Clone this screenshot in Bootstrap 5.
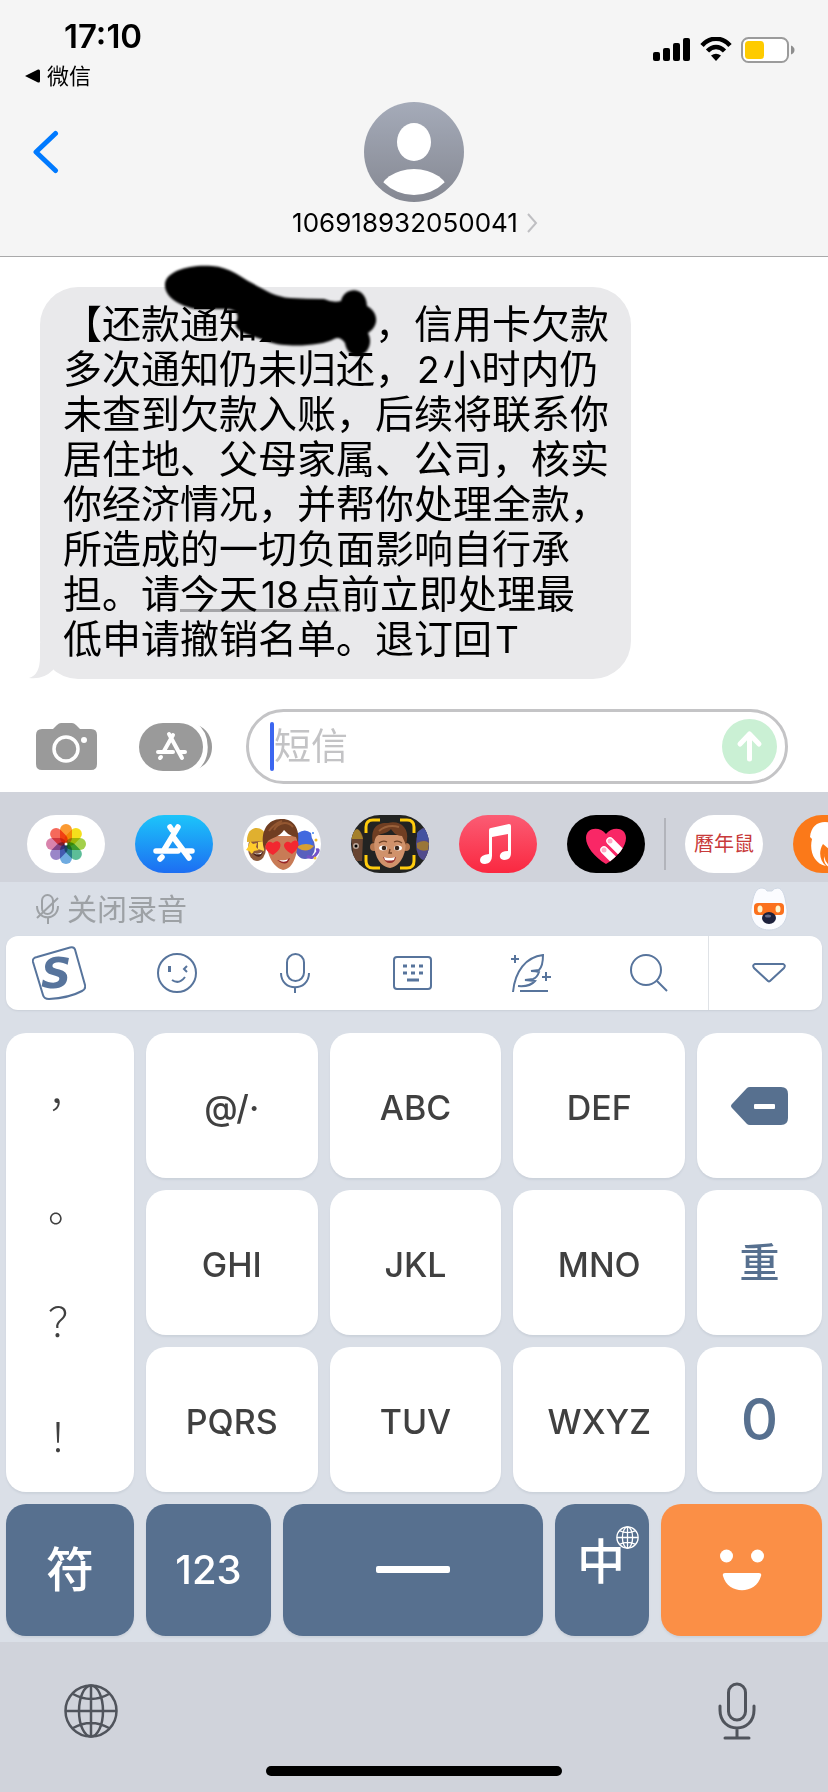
<!DOCTYPE html>
<html lang="zh-CN">
<head>
<meta charset="utf-8">
<meta name="viewport" content="width=device-width, initial-scale=1">
<title>短信</title>
<link href="https://cdn.jsdelivr.net/npm/bootstrap@5.3.0/dist/css/bootstrap.min.css" rel="stylesheet">
<style>
  :root { --slate: #57708f; --tray: #d0d3db; --board: #dadfe7; }
  body { font-family: Inter, "Noto Sans CJK SC", sans-serif; color: #000; background: #fff; text-spacing-trim: space-all; }
  svg { display: block; flex: none; }
  .btn { --bs-btn-border-width: 0; --bs-btn-padding-x: 0; --bs-btn-padding-y: 0; }

  .chat-head { background: #f5f5f5; border-bottom: 1px solid #a9a9aa; }
  .status { height: 102px; padding: 16px 33px 0 25px; }
  .clock { font-size: 33px; line-height: 40px; font-weight: 600; padding-left: 39px; }
  .return-link { font-size: 22px; line-height: 40px; gap: 7px; color: #000; }
  .signals { gap: 9px; margin-top: 21px; }
  .nav-row { display: grid; grid-template-columns: 1fr auto 1fr; align-items: center; padding: 0 32px; }
  .sender { font-size: 26px; line-height: 36px; gap: 8px; padding: 3px 0 15px 2px; color: #000; }

  .thread { padding: 30px 40px; }
  .bubble { position: relative; width: 591px; max-width: 100%; padding: 14px 12px 18px 23px; border-radius: 38px; background: #e9e9eb; }
  .bubble p { font-size: 39px; line-height: 45px; white-space: nowrap; }
  .digits { margin: 0 3px; font-size: 37px; line-height: 1; }
  .date-link { color: #000; border-bottom: 3px solid #a5a5a8; text-decoration: none; display: inline-block; line-height: 36px; height: 36px; }
  .tail { position: absolute; left: -11px; bottom: 0; }
  .ink { position: absolute; left: 120px; top: -27px; filter: blur(1px); }

  .compose { padding: 0 40px 8px 36px; }
  .compose-tools { gap: 42px; margin-right: 34px; }
  .field { height: 75px; min-width: 0; border: 3px solid #c4c4c6; border-radius: 38px; padding: 0 8px 0 21px; }
  .caret { width: 4px; height: 49px; border-radius: 2px; background: #3b66f0; flex: none; }
  .field input { border: 0; outline: 0; background: none; font-size: 37px; line-height: 48px; padding: 0; min-width: 0; }
  .field input::placeholder { color: #c3c3c5; opacity: 1; }
  .send { width: 55px; height: 55px; flex: none; }

  .apps { background: var(--tray); height: 90px; padding: 14px 0 0 27px; gap: 30px; overflow: hidden; }
  .apps .btn { width: 78px; height: 58px; border-radius: 29px; overflow: hidden; flex: none; }
  .apps .rule { width: 2px; height: 52px; margin: 0 -11px; background: #b2b4bb; flex: none; }

  .board { background: var(--board); padding: 0 6px 6px; }
  .voice { height: 54px; padding: 0 34px 0 30px; }
  .voice .btn { font-size: 30px; line-height: 40px; color: #9da1a5; gap: 7px; }
  .tools { height: 74px; background: #fff; border-radius: 12px; margin-bottom: 23px; box-shadow: 0 1px 2px #c9ced7; }
  .tools .btn { height: 74px; }
  .tools .six { display: grid; grid-template-columns: repeat(6, 1fr); flex: 0 0 calc(86% + 6px); margin-left: -6px; }
  .tools .fold { border-left: 1px solid #dfe2e6; border-radius: 0; flex: 1; padding-left: 8px; }
  .tools svg, .keys svg, .keys-low svg { margin: auto; }
  .keys { display: grid; gap: 12px; grid-template-columns: 128fr 172fr 172fr 172fr 125fr; grid-template-rows: repeat(3, 145px); margin-bottom: 12px; }
  .keys-low { display: grid; gap: 12px; grid-template-columns: 128fr 125fr 260fr 94fr 161fr; grid-template-rows: 132px; }
  .key { border-radius: 20px; background: #fff; color: #404040; font-size: 34px; font-weight: 500; box-shadow: 0 2px 2px #ccd2db; }
  .letters { padding-top: 4px; }
  .key.slate-text { color: var(--slate); }
  .key.zero { font-size: 58px; }
  .key.zhong { font-size: 40px; }
  .keys-low .key { background: var(--slate); color: #fff; font-size: 40px; }
  .keys-low .hanzi { font-size: 48px; }
  .keys-low .key.enter { background: #fb8f46; }
  .marks { grid-row: 1 / 4; display: grid; grid-template-rows: repeat(4, 1fr); padding-right: 4px; }
  .marks .btn { font: 300 40px/48px "Noto Sans CJK SC", sans-serif; color: #404040; }
  .lang { position: relative; }
  .lang svg { position: absolute; top: 22px; right: 10px; }
  .lang span { display: block; margin: 0 2px 16px 0; }

  .dock { background: var(--tray); min-height: 150px; padding: 40px 64px 16px; }
  .home-bar { width: 296px; height: 10px; border-radius: 5px; background: #000; }
</style>
</head>
<body class="min-vh-100 d-flex flex-column">

<header class="chat-head">
  <div class="status d-flex justify-content-between">
    <div>
      <div class="clock">17:10</div>
      <a href="#" class="return-link d-flex align-items-center text-decoration-none">
        <svg width="15" height="14" viewBox="0 0 15 14"><path d="M0 7 13 .6Q15 0 15 2v10q0 2-2 1.400Z"/></svg>微信
      </a>
    </div>
    <div class="signals d-flex align-items-start">
      <svg width="38" height="24" viewBox="0 0 38 24"><rect y="15" width="7" height="9" rx="2"/><rect x="10" y="11" width="7" height="13" rx="2"/><rect x="20" y="6" width="7" height="18" rx="2"/><rect x="30" y="1" width="7" height="23" rx="2"/></svg>
      <svg width="32" height="24" viewBox="0 0 32 24"><g fill="none" stroke="#000" stroke-width="4.500"><path d="M2 8.500C10-.5 22-.5 30 8.500"/><path d="M7.500 14c5-5.300 12-5.300 17 0"/></g><path d="M11 18.500q5-3.500 10 0L16 24Z"/></svg>
      <svg width="54" height="26" viewBox="0 0 54 26"><rect x="1" y="1" width="46" height="24" rx="6.500" fill="#fff" stroke="#9b9b9b" stroke-width="2"/><rect x="4" y="4" width="19" height="18" rx="3.500" fill="#fecb00"/><path d="M50 8.500q3.500 1.500 3.500 4.500T50 17.500Z" fill="#8e8e8e"/></svg>
    </div>
  </div>
  <div class="nav-row">
    <button class="btn text-start" aria-label="返回"><svg width="28" height="44" viewBox="0 0 28 44"><path d="M23.500 3.500 4 22l19.500 18.500" fill="none" stroke="#007aff" stroke-width="5" stroke-linecap="round" stroke-linejoin="round"/></svg></button>
    <svg width="100" height="100" viewBox="0 0 100 100"><defs><linearGradient id="av" x2="0" y2="1"><stop stop-color="#a5abb9"/><stop offset="1" stop-color="#858892"/></linearGradient><clipPath id="avc"><circle cx="50" cy="50" r="43"/></clipPath></defs><circle cx="50" cy="50" r="50" fill="url(#av)"/><ellipse cx="50" cy="40" rx="17" ry="19" fill="#fff"/><ellipse cx="50" cy="92" rx="35" ry="25" fill="#fff" clip-path="url(#avc)"/></svg>
    <span></span>
  </div>
  <a href="#" class="sender d-flex justify-content-center align-items-center text-decoration-none">106918932050041
    <svg width="12" height="20" viewBox="0 0 12 20"><path d="m2 1 8 9-8 9" fill="none" stroke="#bfbfc2" stroke-width="2"/></svg>
  </a>
</header>

<main class="flex-grow-1">
  <div class="thread">
    <div class="bubble">
      <svg class="tail" width="36" height="36" viewBox="0 0 36 36"><path d="M11 0v14Q11 32 0 35q14 2 24-8V0Z" fill="#e9e9eb"/></svg>
      <p class="mb-0 position-relative">【还款通知】　　，信用卡欠款<br>多次通知仍未归还，<span class="digits">2</span>小时内仍<br>未查到欠款入账，后续将联系你<br>居住地、父母家属、公司，核实<br>你经济情况，并帮你处理全款，<br>所造成的一切负面影响自行承<br>担。请<a href="#" class="date-link">今天<span class="digits">18</span>点</a>前立即处理最<br>低申请撤销名单。退订回<span class="digits">T</span></p>
      <svg class="ink" width="222" height="100" viewBox="160 260 222 100"><path d="M165 284C166 271 190 264 212 266C230 267 242 278 252 283C266 291 276 297 290 298Q307 299 324 299Q333 303 341 301C344 287 366 285 367 306C378 312 380 325 368 333C374 345 366 356 357 356C350 355 346 350 345 343Q340 336 334 339C322 346 286 348 269 342C255 336 230 333 237 320C240 310 230 309 223 309L196 309C180 306 164 297 165 284Z"/></svg>
    </div>
  </div>

  <form class="compose d-flex align-items-center">
    <div class="compose-tools d-flex align-items-center">
      <button type="button" class="btn" aria-label="相机"><svg width="61" height="48" viewBox="0 0 61 48"><path d="M6 6h11l4-4q2-2 4-2h11q2 0 4 2l4 4h11q6 0 6 6v29q0 6-6 6H6q-6 0-6-6V12q0-6 6-6Z" fill="#9a9a9a"/><circle cx="30" cy="26" r="12" fill="none" stroke="#fff" stroke-width="3.500"/><circle cx="48" cy="17" r="3" fill="#fff"/></svg></button>
      <button type="button" class="btn" aria-label="应用"><svg width="73" height="48" viewBox="0 0 73 48"><rect width="64" height="48" rx="24" fill="#9a9a9a"/><path d="M58 2c20 7 20 37 0 44 12-12 12-32 0-44Z" fill="#9a9a9a"/><path d="M56 1c15 10 15 36 0 46" fill="none" stroke="#fff" stroke-width="3"/><g stroke="#fff" stroke-width="4" stroke-linecap="round" fill="none"><path d="m34 12-9 16M30 11l13 24M19 29h15M41 29h5M22 34l-1 1"/></g></svg></button>
    </div>
    <div class="field d-flex align-items-center flex-grow-1">
      <span class="caret"></span>
      <input type="text" class="flex-grow-1" placeholder="短信" aria-label="短信">
      <button type="button" class="btn send" aria-label="发送"><svg width="55" height="55" viewBox="0 0 55 55"><circle cx="27.500" cy="27.500" r="27.500" fill="#caf0d4"/><path d="M27.500 40V16M18 25l9.500-10L37 25" fill="none" stroke="#fff" stroke-width="5" stroke-linecap="round" stroke-linejoin="round"/></svg></button>
    </div>
  </form>
</main>

<nav class="apps d-flex align-items-center" aria-label="信息应用">
  <button class="btn" aria-label="照片"><svg width="78" height="58" viewBox="0 0 78 58"><style>.petals rect { mix-blend-mode: multiply; }</style><rect width="78" height="58" fill="#fff"/><g class="petals"><rect x="33" y="9" width="12" height="20" rx="6" fill="#fb9a32"/><rect x="33" y="9" width="12" height="20" rx="6" fill="#f5df1c" transform="rotate(45 39 29)"/><rect x="33" y="9" width="12" height="20" rx="6" fill="#a3d04b" transform="rotate(90 39 29)"/><rect x="33" y="9" width="12" height="20" rx="6" fill="#5dbd98" transform="rotate(135 39 29)"/><rect x="33" y="9" width="12" height="20" rx="6" fill="#6fabe0" transform="rotate(180 39 29)"/><rect x="33" y="9" width="12" height="20" rx="6" fill="#9a86c8" transform="rotate(225 39 29)"/><rect x="33" y="9" width="12" height="20" rx="6" fill="#d983ac" transform="rotate(270 39 29)"/><rect x="33" y="9" width="12" height="20" rx="6" fill="#f5695b" transform="rotate(315 39 29)"/></g><circle cx="39" cy="29" r="1.500" fill="#fff"/></svg></button>
  <button class="btn" aria-label="App Store"><svg width="78" height="58" viewBox="0 0 78 58"><defs><linearGradient id="as" x2="0" y2="1"><stop stop-color="#1cc5fa"/><stop offset="1" stop-color="#1d6ef2"/></linearGradient></defs><rect width="78" height="58" fill="url(#as)"/><g stroke="#fff" stroke-width="5.500" stroke-linecap="round"><path d="M43 12 29 35M35 12l2 3M39 23l15 20M21 36h22M51 36h6M27 42l-2 2"/></g></svg></button>
  <button class="btn" aria-label="拟我表情贴纸"><svg width="78" height="58" viewBox="0 0 78 58"><rect width="78" height="58" fill="#fff"/><ellipse cx="14" cy="33" rx="9" ry="13" fill="#8d5a3c"/><path d="M4 27C3 10 20 9 23 21l-2 5Z" fill="#e0b02f"/><path d="m7 26 3 3 4-1-1 4 3 3-5 1-2 3-3-3-3-1 2-3Z" fill="#ffcc2b"/><path d="m15 27 6-1v10l-6-2Z" fill="#ffd94b"/><path d="M9 38q6 2 11-1-3 9-11 1Z" fill="#4a2118"/><path d="M10 38q5 2 9-1l-1 2q-4 1-8-1Z" fill="#fff"/><ellipse cx="62" cy="32" rx="10" ry="12" fill="#5860bd"/><path d="M55 18q7-5 13 0l2 12H55Z" fill="#4269df"/><path d="M55 31q8-4 16 0-7 8-16 2Z" fill="#d7a032"/><path d="M64 41q6 4 10-3 3-4-1-3" fill="none" stroke="#7353c8" stroke-width="3"/><circle cx="70" cy="18" r="1" fill="#4584e9"/><circle cx="73" cy="25" r="1.500" fill="#efbb28"/><circle cx="72" cy="43" r="1.500" fill="#f4ca3e"/><path d="M23 21h31c2 15-3 33-14 34C29 52 23 38 23 21Z" fill="#c87b56"/><path d="M21 34C16 14 27 3 39 4c12 0 18 10 16 24l-2-6c-7-1-10-5-12-7-4 7-13 8-16 11Z" fill="#703e22"/><path d="M31 15c4-8 14-9 19-3M26 16q5-7 13-10" stroke="#945731" stroke-width="2" fill="none"/><path d="M30 40c-6-3-10-8-6-12 3-3 6 0 6 0s4-4 7 0c2 5-3 9-7 12ZM49 39c-6-3-10-8-7-11 3-3 6 0 6 0s4-5 7-1c2 4-2 9-6 12Z" fill="#f22830"/><path d="M34 45q7 2 13-2-3 10-13 2Z" fill="#982527"/><path d="M36 45q6 1 9-1l-1 2q-5 2-8-1Z" fill="#fff"/></svg></button>
  <button class="btn" aria-label="拟我表情"><svg width="78" height="58" viewBox="0 0 78 58"><rect width="78" height="58" fill="#222322"/><path d="M0 22q7-15 12 0l-1 24H3Z" fill="#684431"/><path d="M0 24Q6 4 12 24Z" fill="#a4802b"/><circle cx="5" cy="31" r="3" fill="#bba89b"/><circle cx="5" cy="31" r="1.500"/><ellipse cx="73" cy="29" rx="8" ry="16" fill="#514b8c"/><path d="M66 18q5-7 12-1v8H66Z" fill="#4353a0"/><path d="M66 28q8-4 12 0l-1 7q-7 2-11-2Z" fill="#9a7638"/><rect x="14" y="4" width="50" height="50" rx="8" fill="#222322"/><path d="M15 18v-6q0-7 7-7h7M49 5h7q7 0 7 7v6M15 40v6q0 7 7 7h7M49 53h7q7 0 7-7v-6" stroke="#ffcc0c" stroke-width="3" fill="none"/><circle cx="23" cy="32" r="4" fill="#b77850"/><circle cx="55" cy="32" r="4" fill="#b77850"/><path d="M24 20h30c3 17-4 31-15 33-12-2-18-16-15-33Z" fill="#d0926b"/><path d="M22 29C19 13 26 7 37 8c12-3 21 5 19 17l-1 5-4-9c-6 0-9-4-11-7-3 5-12 4-15 8Z" fill="#703e22"/><path d="M28 16q8-7 20-4" stroke="#99603a" stroke-width="2" fill="none"/><ellipse cx="32" cy="33" rx="4" ry="2.500" fill="#fff"/><ellipse cx="47" cy="33" rx="4" ry="2.500" fill="#fff"/><circle cx="33" cy="33" r="2.300" fill="#37251b"/><circle cx="46" cy="33" r="2.300" fill="#37251b"/><path d="M28 28q4-3 8-1M43 27q4-2 8 1M39 34l-1 4h3" stroke="#714327" stroke-width="1.300" fill="none"/><path d="M32 42q7 2 13 0-1 6-6 6t-7-6Z" fill="#97312e"/><path d="M33 42q6 2 11 0l-1 3q-5 1-9 0Z" fill="#fff"/></svg></button>
  <button class="btn" aria-label="音乐"><svg width="78" height="58" viewBox="0 0 78 58"><defs><linearGradient id="mu" x2="0" y2="1"><stop stop-color="#fb5c74"/><stop offset="1" stop-color="#fa2840"/></linearGradient></defs><rect width="78" height="58" fill="url(#mu)"/><path d="M30 15q0-2 2-2l18-4q2 0 2 2v27q0 7-7 7-5-1-4-5 1-4 8-4V19l-16 3v19q0 7-7 8-5 0-5-4 0-5 9-6Z" fill="#fff"/></svg></button>
  <button class="btn" aria-label="Digital Touch"><svg width="78" height="58" viewBox="0 0 78 58"><defs><clipPath id="ht"><path d="M39 49C27 42 19 31 19 23c0-11 14-12 20-4 6-8 20-7 20 4 0 8-8 19-20 26Z"/></clipPath></defs><rect width="78" height="58"/><g clip-path="url(#ht)"><rect width="78" height="58" fill="#f92766"/><path d="m43 26 18 18M37 35l18 18" stroke="#fff" stroke-width="7.500" stroke-linecap="round"/><circle cx="43" cy="26" r="2.500" fill="#ffabc7"/><circle cx="37" cy="35" r="2.500" fill="#ffabc7"/></g></svg></button>
  <span class="rule"></span>
  <button class="btn" aria-label="暦年鼠"><svg width="78" height="58" viewBox="0 0 78 58"><rect width="78" height="58" fill="#fff"/><text x="39" y="36" text-anchor="middle" font-family="Noto Sans CJK TC" font-size="20" fill="#c83a3a">曆年鼠</text></svg></button>
  <button class="btn" aria-label="UC浏览器"><svg width="78" height="58" viewBox="0 0 78 58"><rect width="78" height="58" fill="#fb7919"/><path d="M17 22C18 12 24 7 32 7q14 0 22 12v34H38c-8-2-10-14-2-19l-6-5c-5 8-3 17 3 22C21 49 16 36 19 24Z" fill="#fff"/><path d="M31 41c0-7 6-10 11-8v20q-9-2-11-12Z" fill="#fb7919"/></svg></button>
</nav>

<section class="board">
  <div class="voice d-flex justify-content-between align-items-center">
    <button class="btn d-flex align-items-center"><svg width="24" height="30" viewBox="0 0 24 30" fill="none" stroke="#9da1a5" stroke-width="2"><rect x="6" y="1" width="11" height="19" rx="5.500"/><path d="M1 12c0 15 21 15 21 0M12 23v7M1 24 22 4"/></svg>关闭录音</button>
    <button class="btn" aria-label="汪仔"><svg width="38" height="44" viewBox="0 0 38 44"><path d="M2 17C4 5 7 1 12 1q4 0 5 3h5q2-3 6-3c5 1 7 8 8 16 4 15-4 26-17 26S-2 32 2 17Z" fill="#fbfcff" stroke="#cfd7e3"/><rect x="4" y="16" width="30" height="12" rx="4" fill="#fb711d"/><ellipse cx="10" cy="22" rx="2.500" ry="3.500" fill="#fff6cf"/><ellipse cx="28" cy="22" rx="2.500" ry="3.500" fill="#fff6cf"/><ellipse cx="19" cy="31" rx="7" ry="6" fill="#1d213c"/><ellipse cx="18" cy="29" rx="3" ry="1.500" fill="#646a87"/></svg></button>
  </div>

  <div class="tools d-flex">
    <div class="six">
      <button class="btn" aria-label="搜狗"><svg width="54" height="54" viewBox="0 0 54 54"><path d="M5 11 38 1.500q4-1 5 2L53 39q1 4-3 6-13 7-33 8-5 0-6-4L1 16q-1-4 4-5Z" fill="none" stroke="#57749c" stroke-width="2"/><text x="9" y="42" font-family="DejaVu Sans" font-weight="700" font-style="italic" font-size="42" fill="#57749c">S</text></svg></button>
      <button class="btn" aria-label="表情"><svg width="40" height="40" viewBox="0 0 40 40" fill="none" stroke="#57749c" stroke-width="2"><circle cx="20" cy="20" r="19"/><path d="M15 27q7 5 13-3M30 13l-3 3 3 3"/><path d="M12.500 13v6" stroke-width="3"/></svg></button>
      <button class="btn" aria-label="语音"><svg width="32" height="40" viewBox="0 0 32 40" fill="none" stroke="#57749c" stroke-width="2"><rect x="8" y="1" width="17" height="27" rx="8.500"/><path d="M2 20c0 19 28 19 28 0M16 34v6"/></svg></button>
      <button class="btn" aria-label="键盘"><svg width="39" height="34" viewBox="0 0 39 34"><rect x="1" y="1" width="37" height="32" rx="3" fill="none" stroke="#57749c" stroke-width="2"/><path d="M10 10h4M18 10h4M26 10h4M10 17h4M18 17h4M26 17h4M14 24h12" stroke="#57749c" stroke-width="3"/></svg></button>
      <button class="btn" aria-label="智能写作"><svg width="40" height="40" viewBox="0 0 40 40" fill="none" stroke="#57749c" stroke-width="2"><path d="M2 39C4 18 15 4 32 2q0 11-4 15l-8 1q5 0 8 1-2 6-6 7l-8 1 10 1q-5 6-17 5M9 38h28M4 2v8M0 6h8M35 19v9M31 24h9"/></svg></button>
      <button class="btn" aria-label="搜索"><svg width="38" height="38" viewBox="0 0 38 38" fill="none" stroke="#57749c" stroke-width="2"><circle cx="16" cy="16" r="15"/><path d="m27 27 10 10"/></svg></button>
    </div>
    <button class="btn fold" aria-label="收起"><svg width="34" height="20" viewBox="0 0 34 20"><path d="M3 1h28q3 1 1 4L18 18q-1 1-2 0L2 5Q0 2 3 1Z" fill="none" stroke="#57749c" stroke-width="2"/></svg></button>
  </div>

  <div class="keys">
    <div class="key marks">
      <button class="btn">，</button><button class="btn">。</button><button class="btn">？</button><button class="btn">！</button>
    </div>
    <button class="btn key letters">@/·</button>
    <button class="btn key letters">ABC</button>
    <button class="btn key letters">DEF</button>
    <button class="btn key" aria-label="删除"><svg width="58" height="40" viewBox="0 0 58 40"><path d="M1 18 16 2q1-1 3-1h31q7 0 7 7v24q0 7-7 7H19q-2 0-3-1L1 22q-2-2 0-4Z" fill="#57708f"/><rect x="23" y="18" width="21" height="5" rx="1" fill="#fff"/></svg></button>
    <button class="btn key letters">GHI</button>
    <button class="btn key letters">JKL</button>
    <button class="btn key letters">MNO</button>
    <button class="btn key slate-text zhong">重</button>
    <button class="btn key letters">PQRS</button>
    <button class="btn key letters">TUV</button>
    <button class="btn key letters">WXYZ</button>
    <button class="btn key slate-text zero">0</button>
  </div>
  <div class="keys-low">
    <button class="btn key hanzi">符</button>
    <button class="btn key">123</button>
    <button class="btn key" aria-label="空格"><svg width="74" height="8" viewBox="0 0 74 8"><rect width="74" height="7" rx="2" fill="#fff"/></svg></button>
    <button class="btn key hanzi lang"><span>中</span><svg width="23" height="23" viewBox="0 0 54 54" fill="none" stroke="#fff" stroke-width="3"><circle cx="27" cy="27" r="25"/><ellipse cx="27" cy="27" rx="12" ry="25"/><path d="M2 27h50M27 2v50M8 11q19 9 38 0M8 43q19-9 38 0"/></svg></button>
    <button class="btn key enter" aria-label="发送表情"><svg width="44" height="42" viewBox="0 0 44 42" fill="#fff"><circle cx="6.500" cy="7" r="6.500"/><circle cx="37.500" cy="7" r="6.500"/><path d="M5 24h34q3 0 2 3c-5 19-33 19-38 0q-1-3 2-3Z"/></svg></button>
  </div>
</section>

<footer class="dock d-flex flex-column justify-content-between">
  <div class="d-flex justify-content-between align-items-center">
    <button class="btn" aria-label="切换键盘"><svg width="54" height="54" viewBox="0 0 54 54" fill="none" stroke="#50545c" stroke-width="2.500"><circle cx="27" cy="27" r="25.500"/><ellipse cx="27" cy="27" rx="12" ry="25.500"/><path d="M2 27h50M27 2v50M9 10q18 10 36 0M9 44q18-10 36 0"/></svg></button>
    <button class="btn me-2" aria-label="听写"><svg width="38" height="58" viewBox="0 0 38 58" fill="none" stroke="#50545c" stroke-width="3" stroke-linecap="round"><rect x="10.500" y="2" width="17" height="36" rx="8.500"/><path d="M2 24v4c0 24 34 24 34 0v-4M19 46v10M7 56h24"/></svg></button>
  </div>
  <div class="home-bar mx-auto"></div>
</footer>

<script src="https://cdn.jsdelivr.net/npm/bootstrap@5.3.0/dist/js/bootstrap.bundle.min.js"></script>
</body>
</html>
